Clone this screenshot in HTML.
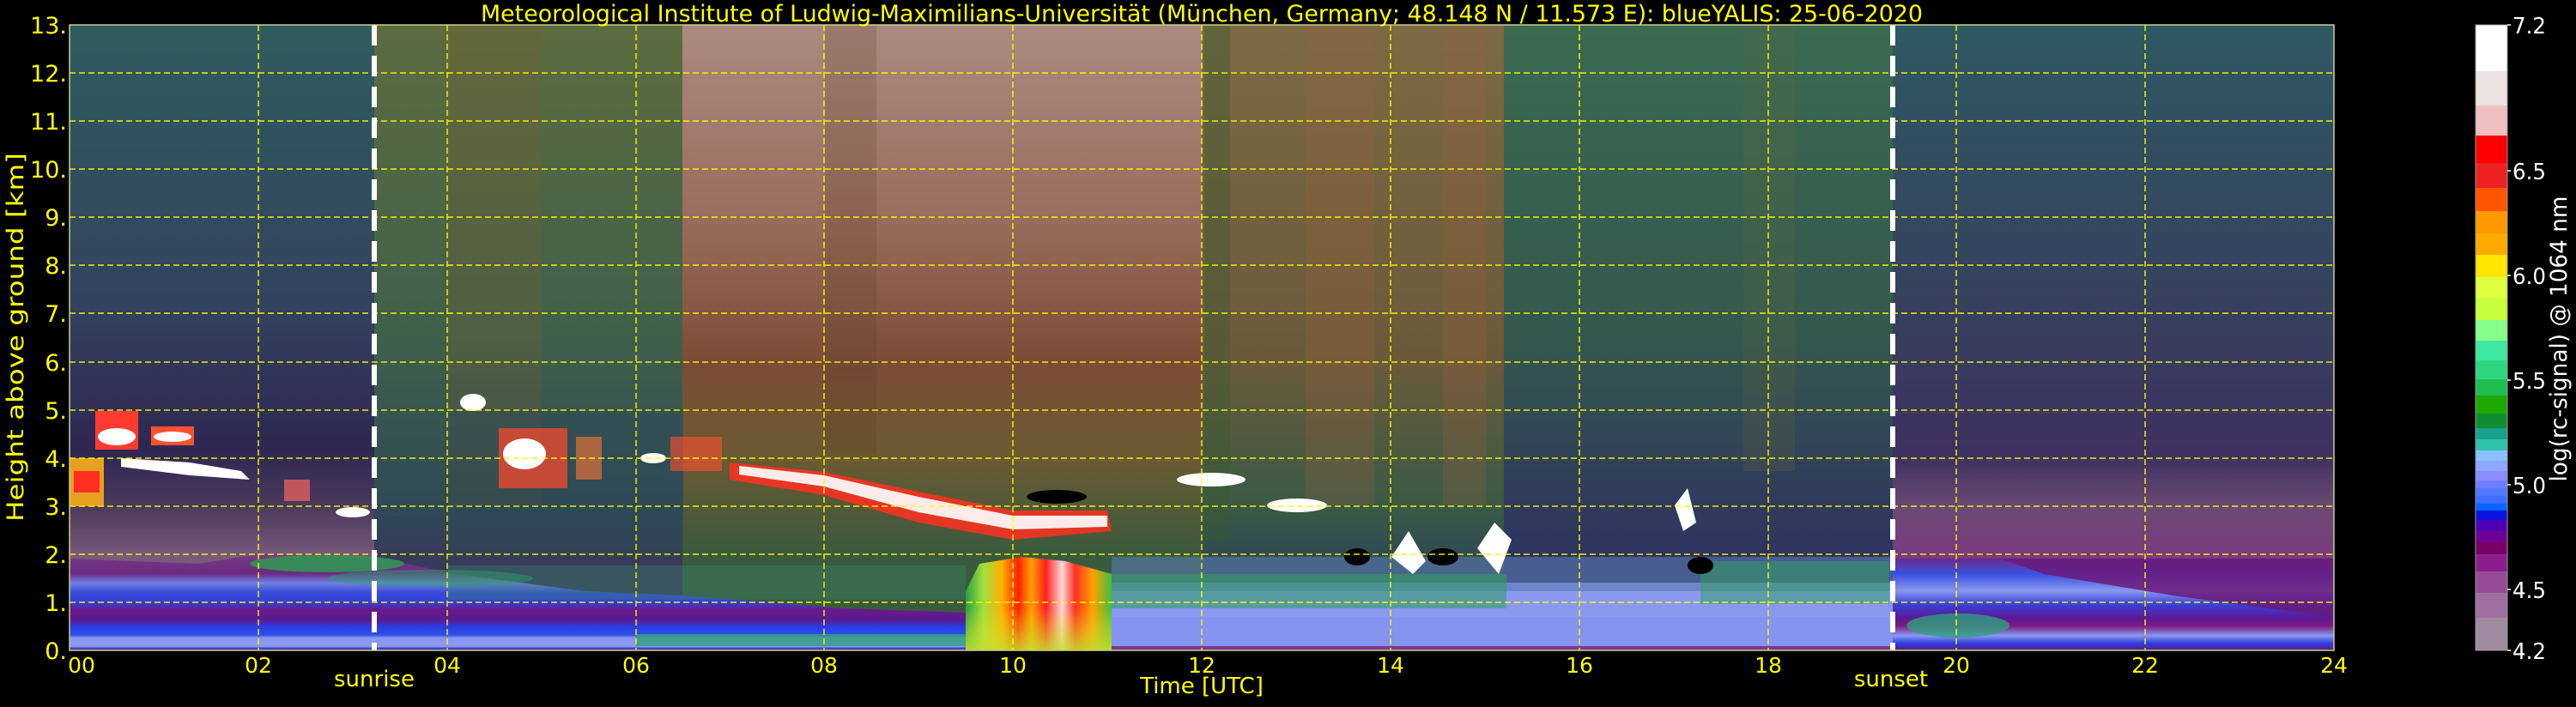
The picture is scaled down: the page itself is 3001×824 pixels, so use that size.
<!DOCTYPE html>
<html><head><meta charset="utf-8"><style>
html,body{margin:0;padding:0;background:#000;}
svg{display:block;}
text{font-family:"DejaVu Sans","Liberation Sans",sans-serif;}
</style></head><body>
<svg width="3001" height="824" viewBox="0 0 3001 824" xmlns="http://www.w3.org/2000/svg">
<rect width="3001" height="824" fill="#000"/>
<defs>
<linearGradient id="gA" gradientUnits="userSpaceOnUse" x1="0" y1="0" x2="0" y2="729">
<stop offset="0" stop-color="#2f5c5e"/><stop offset="0.45" stop-color="#33425e"/><stop offset="0.68" stop-color="#2e2752"/><stop offset="0.77" stop-color="#4a3a5c"/><stop offset="0.85" stop-color="#7a5a7c"/><stop offset="1" stop-color="#7a5a7c"/></linearGradient>
<linearGradient id="gB" gradientUnits="userSpaceOnUse" x1="0" y1="0" x2="0" y2="729">
<stop offset="0" stop-color="#5c6c40"/><stop offset="0.5" stop-color="#40604a"/><stop offset="0.77" stop-color="#2e4a56"/><stop offset="0.85" stop-color="#383a5c"/><stop offset="1" stop-color="#383a5c"/></linearGradient>
<linearGradient id="gC" gradientUnits="userSpaceOnUse" x1="0" y1="0" x2="0" y2="729">
<stop offset="0" stop-color="#aa8a80"/><stop offset="0.3" stop-color="#9a6e5e"/><stop offset="0.54" stop-color="#7c4c36"/><stop offset="0.69" stop-color="#6a5a32"/><stop offset="0.85" stop-color="#3a5a3e"/><stop offset="1" stop-color="#3a5a3e"/></linearGradient>
<linearGradient id="gD" gradientUnits="userSpaceOnUse" x1="0" y1="0" x2="0" y2="729">
<stop offset="0" stop-color="#7c6a44"/><stop offset="0.54" stop-color="#6a5a3a"/><stop offset="0.77" stop-color="#3a5a46"/><stop offset="0.85" stop-color="#304a52"/><stop offset="1" stop-color="#304a52"/></linearGradient>
<linearGradient id="gE" gradientUnits="userSpaceOnUse" x1="0" y1="0" x2="0" y2="729">
<stop offset="0" stop-color="#3a6a50"/><stop offset="0.5" stop-color="#34584e"/><stop offset="0.77" stop-color="#303a5c"/><stop offset="0.85" stop-color="#2e3460"/><stop offset="1" stop-color="#2e3460"/></linearGradient>
<linearGradient id="gF" gradientUnits="userSpaceOnUse" x1="0" y1="0" x2="0" y2="729">
<stop offset="0" stop-color="#2e5862"/><stop offset="0.46" stop-color="#36405e"/><stop offset="0.69" stop-color="#3e3060"/><stop offset="0.77" stop-color="#6a4a74"/><stop offset="0.85" stop-color="#7a3a80"/><stop offset="1" stop-color="#7a3a80"/></linearGradient>
<linearGradient id="bl1" gradientUnits="userSpaceOnUse" x1="0" y1="617" x2="0" y2="729">
<stop offset="0" stop-color="#7a3a86"/><stop offset="0.2" stop-color="#6a2a80"/><stop offset="0.3" stop-color="#7080e8"/><stop offset="0.4" stop-color="#3a4ad8"/><stop offset="0.5" stop-color="#3040d8"/><stop offset="0.58" stop-color="#6a1a8a"/><stop offset="0.68" stop-color="#5a1a90"/><stop offset="0.75" stop-color="#2a3ae0"/><stop offset="0.84" stop-color="#3050e8"/><stop offset="0.87" stop-color="#8a98f0"/><stop offset="0.96" stop-color="#8a98f0"/><stop offset="0.98" stop-color="#3040d0"/><stop offset="1" stop-color="#7a2a6a"/></linearGradient>
<linearGradient id="bl2" gradientUnits="userSpaceOnUse" x1="0" y1="622" x2="0" y2="729">
<stop offset="0" stop-color="#6a2a8a"/><stop offset="0.17" stop-color="#3a50e0"/><stop offset="0.35" stop-color="#8a98f0"/><stop offset="0.5" stop-color="#3a40d8"/><stop offset="0.64" stop-color="#5a1a9a"/><stop offset="0.73" stop-color="#7a1a80"/><stop offset="0.84" stop-color="#8a98f0"/><stop offset="0.92" stop-color="#3040e0"/><stop offset="1" stop-color="#5a1a8a"/></linearGradient>
<linearGradient id="col" gradientUnits="userSpaceOnUse" x1="1044" y1="0" x2="1214" y2="0">
<stop offset="0" stop-color="#2aa040"/><stop offset="0.12" stop-color="#a0e040"/><stop offset="0.25" stop-color="#ffb000"/><stop offset="0.36" stop-color="#ff2000"/><stop offset="0.45" stop-color="#ffa000"/><stop offset="0.55" stop-color="#ff2020"/><stop offset="0.66" stop-color="#ffd8d8"/><stop offset="0.75" stop-color="#ff3020"/><stop offset="0.87" stop-color="#ffa000"/><stop offset="1" stop-color="#40c040"/></linearGradient>
<linearGradient id="colb" gradientUnits="userSpaceOnUse" x1="0" y1="680" x2="0" y2="729">
<stop offset="0" stop-color="#e8e820" stop-opacity="0"/><stop offset="1" stop-color="#c0e030" stop-opacity="0.85"/></linearGradient>
</defs>

<g transform="translate(81,29)">
<rect x="0" y="0" width="356" height="729" fill="url(#gA)"/>
<rect x="355" y="0" width="360" height="729" fill="url(#gB)"/>
<rect x="714" y="0" width="606" height="729" fill="url(#gC)"/>
<rect x="1319" y="0" width="353" height="729" fill="url(#gD)"/>
<rect x="1671" y="0" width="454" height="729" fill="url(#gE)"/>
<rect x="2124" y="0" width="514" height="729" fill="url(#gF)"/>
<rect x="440" y="0" width="110" height="560" fill="#7a5a30" opacity="0.25"/>
<rect x="880" y="0" width="60" height="500" fill="#5a3a2a" opacity="0.2"/>
<rect x="1322" y="0" width="30" height="600" fill="#3a5a30" opacity="0.4"/>
<rect x="1440" y="0" width="80" height="560" fill="#9a6040" opacity="0.25"/>
<rect x="1600" y="0" width="50" height="560" fill="#9a6040" opacity="0.25"/>
<rect x="1950" y="0" width="60" height="520" fill="#6a6a3a" opacity="0.2"/>
<rect x="440" y="450" width="275" height="170" fill="#2e4a56" opacity="0.5"/>

<polygon points="0,622 150,628 221,617 355,620 450,640 600,660 714,665 900,680 1044,685 1044,729 0,729" fill="url(#bl1)"/>
<ellipse cx="300" cy="628" rx="90" ry="10" fill="#2aa050" opacity="0.8"/>
<ellipse cx="420" cy="645" rx="120" ry="10" fill="#30a070" opacity="0.5"/>
<rect x="660" y="710" width="384" height="14" fill="#30a080" opacity="0.8"/>
<rect x="440" y="630" width="604" height="40" fill="#3a8a6a" opacity="0.35"/>
<rect x="1214" y="650" width="910" height="79" fill="#8a98f0"/>
<rect x="1214" y="620" width="910" height="40" fill="#5a7ab0" opacity="0.6"/>
<rect x="1214" y="640" width="460" height="40" fill="#30a060" opacity="0.55"/>
<rect x="1900" y="625" width="220" height="50" fill="#30a060" opacity="0.5"/>
<rect x="1214" y="690" width="910" height="36" fill="#8090f0" opacity="0.5"/>
<rect x="1214" y="724" width="910" height="5" fill="#7a3a8a"/>
<polygon points="2124,622 2638,622 2638,729 2124,729" fill="url(#bl2)"/>
<polygon points="2250,622 2638,622 2638,690 2450,665 2300,640" fill="#6a1a7a" opacity="0.85"/>
<ellipse cx="2200" cy="700" rx="60" ry="14" fill="#30a080" opacity="0.8"/>

<polygon points="1044,729 1044,660 1060,628 1110,620 1160,625 1214,640 1214,729" fill="url(#col)"/>
<rect x="1044" y="680" width="170" height="49" fill="url(#colb)"/>
<polygon points="769,510 879,521 989,544 1099,566 1209,566 1214,590 1099,600 989,580 879,548 769,530" fill="#ff3020" opacity="0.85"/>
<polygon points="780,514 879,525 989,550 1099,572 1209,572 1209,585 1099,588 989,568 879,538 780,524" fill="#ffffff" opacity="0.9"/>
<ellipse cx="1150" cy="550" rx="35" ry="8" fill="#000"/>
<ellipse cx="1330" cy="530" rx="40" ry="8" fill="#fff"/>
<ellipse cx="1430" cy="560" rx="35" ry="8" fill="#fff"/>
<rect x="0" y="505" width="40" height="56" fill="#e8a020"/>
<rect x="5" y="520" width="30" height="25" fill="#ff3020"/>
<rect x="30" y="450" width="50" height="45" fill="#ff3a30"/>
<ellipse cx="55" cy="480" rx="22" ry="10" fill="#fff"/>
<rect x="95" y="468" width="50" height="22" fill="#ff5030"/>
<ellipse cx="120" cy="480" rx="22" ry="6" fill="#fff"/>
<polygon points="60,505 140,510 200,520 210,530 140,525 60,515" fill="#fff"/>
<rect x="250" y="530" width="30" height="25" fill="#e06060" opacity="0.8"/>
<ellipse cx="330" cy="568" rx="20" ry="6" fill="#fff"/>
<ellipse cx="470" cy="440" rx="15" ry="10" fill="#fff"/>
<rect x="500" y="470" width="80" height="70" fill="#e84a30" opacity="0.8"/>
<ellipse cx="530" cy="500" rx="25" ry="18" fill="#fff"/>
<rect x="590" y="480" width="30" height="50" fill="#e0703a" opacity="0.7"/>
<rect x="700" y="480" width="60" height="40" fill="#ff5030" opacity="0.6"/>
<ellipse cx="680" cy="505" rx="15" ry="6" fill="#fff"/>
<polygon points="1540,620 1560,590 1580,625 1565,640" fill="#fff"/>
<polygon points="1640,610 1660,580 1680,600 1665,640" fill="#fff"/>
<ellipse cx="1500" cy="620" rx="15" ry="10" fill="#000"/>
<ellipse cx="1600" cy="620" rx="18" ry="10" fill="#000"/>
<polygon points="1870,560 1885,540 1895,580 1880,590" fill="#fff"/>
<ellipse cx="1900" cy="630" rx="15" ry="10" fill="#000"/>

<g stroke="#ffff00" stroke-width="1.5" stroke-dasharray="7,4" fill="none" opacity="0.9">
<path d="M0 56H2638M0 112H2638M0 168H2638M0 224H2638M0 280H2638M0 336H2638M0 393H2638M0 449H2638M0 505H2638M0 561H2638M0 617H2638M0 673H2638"/>
<path d="M220 0V729M440 0V729M660 0V729M879 0V729M1099 0V729M1319 0V729M1539 0V729M1759 0V729M1979 0V729M2198 0V729M2418 0V729"/>
</g>
<g stroke="#fff" stroke-width="6" stroke-dasharray="24,12">
<path d="M355 0V729"/><path d="M2124 0V729"/>
</g>
<rect x="0" y="0" width="2638" height="729" fill="none" stroke="#cccc88" stroke-width="1.5"/>
</g>

<text x="560" y="25" font-size="27" fill="#ffff00" textLength="1680" lengthAdjust="spacingAndGlyphs">Meteorological Institute of Ludwig-Maximilians-Universität (München, Germany; 48.148 N / 11.573 E):    blueYALIS: 25-06-2020</text>

<g font-size="27" fill="#ffff00" text-anchor="end">
<text x="78" y="39">13.</text><text x="78" y="95">12.</text><text x="78" y="151">11.</text><text x="78" y="207">10.</text>
<text x="78" y="263">9.</text><text x="78" y="319">8.</text><text x="78" y="375">7.</text><text x="78" y="432">6.</text>
<text x="78" y="488">5.</text><text x="78" y="544">4.</text><text x="78" y="600">3.</text><text x="78" y="656">2.</text>
<text x="78" y="712">1.</text><text x="78" y="768">0.</text>
</g>
<text transform="translate(27,393) rotate(-90)" font-size="27" fill="#ffff00" text-anchor="middle" textLength="430" lengthAdjust="spacingAndGlyphs">Height above ground [km]</text>

<g font-size="25" fill="#ffff00" text-anchor="middle">
<text x="95" y="784">00</text><text x="301" y="784">02</text><text x="521" y="784">04</text><text x="741" y="784">06</text>
<text x="960" y="784">08</text><text x="1180" y="784">10</text><text x="1400" y="784">12</text><text x="1620" y="784">14</text>
<text x="1840" y="784">16</text><text x="2060" y="784">18</text><text x="2279" y="784">20</text><text x="2499" y="784">22</text>
<text x="2719" y="784">24</text>
<text x="436" y="800" font-size="26">sunrise</text>
<text x="2203" y="800" font-size="26">sunset</text>
<text x="1400" y="808" font-size="26">Time [UTC]</text>
</g>

<g>
<rect x="2884" y="29" width="37" height="54" fill="#ffffff"/>
<rect x="2884" y="83" width="37" height="40" fill="#ece2e2"/>
<rect x="2884" y="123" width="37" height="35" fill="#f0c0c0"/>
<rect x="2884" y="158" width="37" height="32" fill="#ff0000"/>
<rect x="2884" y="190" width="37" height="29" fill="#ee2222"/>
<rect x="2884" y="219" width="37" height="27" fill="#ff5500"/>
<rect x="2884" y="246" width="37" height="26" fill="#ff9900"/>
<rect x="2884" y="272" width="37" height="25" fill="#ffaa00"/>
<rect x="2884" y="297" width="37" height="26" fill="#ffe600"/>
<rect x="2884" y="323" width="37" height="24" fill="#dfff3f"/>
<rect x="2884" y="347" width="37" height="26" fill="#c8ff3c"/>
<rect x="2884" y="373" width="37" height="24" fill="#88ff88"/>
<rect x="2884" y="397" width="37" height="23" fill="#3de8a0"/>
<rect x="2884" y="420" width="37" height="22" fill="#2ed680"/>
<rect x="2884" y="442" width="37" height="19" fill="#1ebe50"/>
<rect x="2884" y="461" width="37" height="21" fill="#1ea800"/>
<rect x="2884" y="482" width="37" height="17" fill="#128c32"/>
<rect x="2884" y="499" width="37" height="13" fill="#1aa08c"/>
<rect x="2884" y="512" width="37" height="13" fill="#2dc3a8"/>
<rect x="2884" y="525" width="37" height="12" fill="#8ac0ff"/>
<rect x="2884" y="537" width="37" height="12" fill="#8ca8ff"/>
<rect x="2884" y="549" width="37" height="11" fill="#8c8cff"/>
<rect x="2884" y="560" width="37" height="9" fill="#6e80ff"/>
<rect x="2884" y="569" width="37" height="9" fill="#5078ff"/>
<rect x="2884" y="578" width="37" height="9" fill="#3c6eff"/>
<rect x="2884" y="587" width="37" height="8" fill="#0064ff"/>
<rect x="2884" y="595" width="37" height="11" fill="#0a14dc"/>
<rect x="2884" y="606" width="37" height="13" fill="#5000b4"/>
<rect x="2884" y="619" width="37" height="13" fill="#6e0096"/>
<rect x="2884" y="632" width="37" height="14" fill="#780064"/>
<rect x="2884" y="646" width="37" height="20" fill="#8c1e8c"/>
<rect x="2884" y="666" width="37" height="25" fill="#964b96"/>
<rect x="2884" y="691" width="37" height="29" fill="#a06ea0"/>
<rect x="2884" y="720" width="37" height="38" fill="#a08ca0"/>
<rect x="2884" y="29" width="37" height="729" fill="none" stroke="#999" stroke-width="1"/>
<g stroke="#fff" stroke-width="1.5"><path d="M2921 29h4M2921 199h4M2921 321h4M2921 443h4M2921 565h4M2921 687h4M2921 758h4"/></g>
<g font-size="26" fill="#fff">
<text x="2927" y="39" textLength="39" lengthAdjust="spacingAndGlyphs">7.2</text>
<text x="2927" y="209" textLength="39" lengthAdjust="spacingAndGlyphs">6.5</text>
<text x="2927" y="331" textLength="39" lengthAdjust="spacingAndGlyphs">6.0</text>
<text x="2927" y="453" textLength="39" lengthAdjust="spacingAndGlyphs">5.5</text>
<text x="2927" y="575" textLength="39" lengthAdjust="spacingAndGlyphs">5.0</text>
<text x="2927" y="697" textLength="39" lengthAdjust="spacingAndGlyphs">4.5</text>
<text x="2927" y="768" textLength="39" lengthAdjust="spacingAndGlyphs">4.2</text>
</g>
<text transform="translate(2990,395) rotate(-90)" font-size="27" fill="#fff" text-anchor="middle" textLength="333" lengthAdjust="spacingAndGlyphs">log(rc-signal) @ 1064 nm</text>
</g>
</svg>
</body></html>
